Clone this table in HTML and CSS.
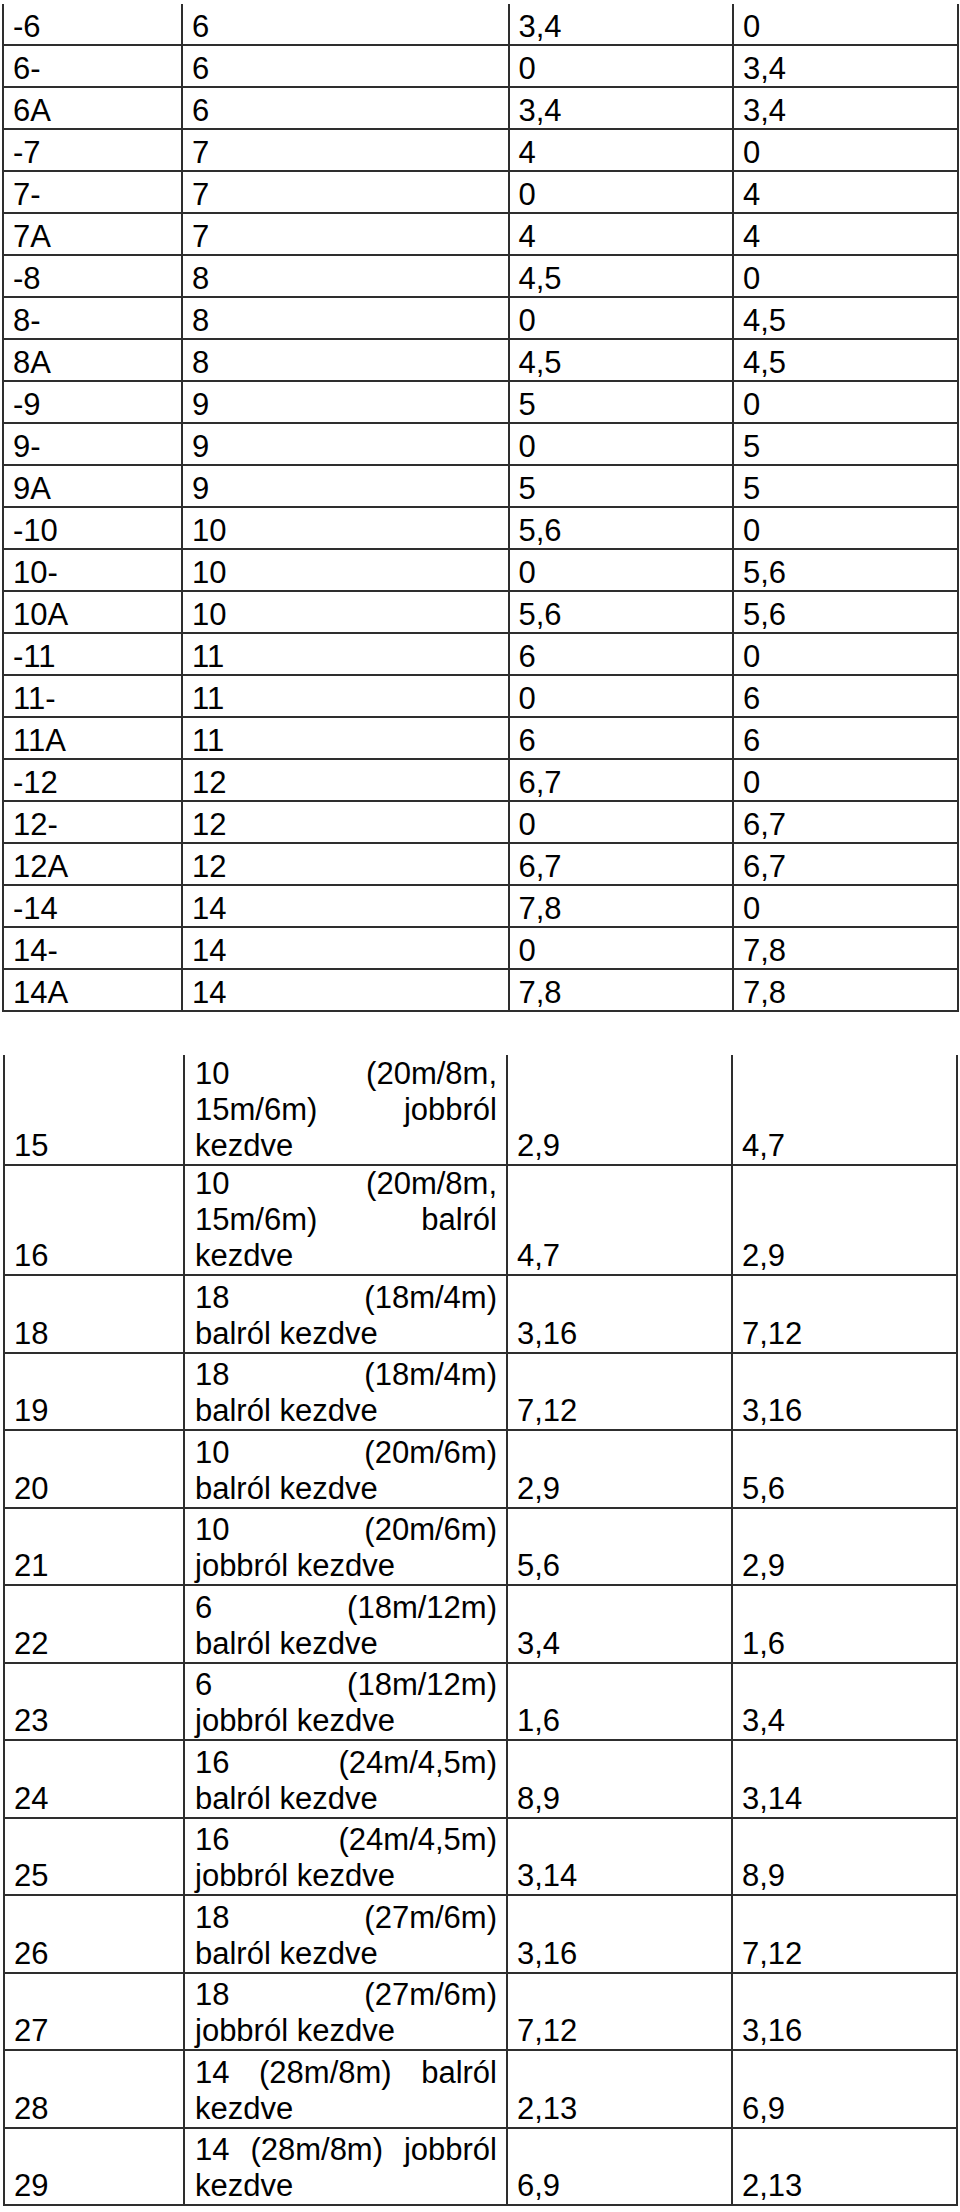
FILE: index.html
```html
<!DOCTYPE html>
<html lang="hu">
<head>
<meta charset="utf-8">
<title>Táblázat</title>
<link rel="stylesheet" href="styles.css">
</head>
<body>
<table class="grid grid-a">
<colgroup><col class="a1"><col class="a2"><col class="a3"><col class="a4"></colgroup>
<tbody>
<tr><td>-6</td><td>6</td><td>3,4</td><td>0</td></tr>
<tr><td>6-</td><td>6</td><td>0</td><td>3,4</td></tr>
<tr><td>6A</td><td>6</td><td>3,4</td><td>3,4</td></tr>
<tr><td>-7</td><td>7</td><td>4</td><td>0</td></tr>
<tr><td>7-</td><td>7</td><td>0</td><td>4</td></tr>
<tr><td>7A</td><td>7</td><td>4</td><td>4</td></tr>
<tr><td>-8</td><td>8</td><td>4,5</td><td>0</td></tr>
<tr><td>8-</td><td>8</td><td>0</td><td>4,5</td></tr>
<tr><td>8A</td><td>8</td><td>4,5</td><td>4,5</td></tr>
<tr><td>-9</td><td>9</td><td>5</td><td>0</td></tr>
<tr><td>9-</td><td>9</td><td>0</td><td>5</td></tr>
<tr><td>9A</td><td>9</td><td>5</td><td>5</td></tr>
<tr><td>-10</td><td>10</td><td>5,6</td><td>0</td></tr>
<tr><td>10-</td><td>10</td><td>0</td><td>5,6</td></tr>
<tr><td>10A</td><td>10</td><td>5,6</td><td>5,6</td></tr>
<tr><td>-11</td><td>11</td><td>6</td><td>0</td></tr>
<tr><td>11-</td><td>11</td><td>0</td><td>6</td></tr>
<tr><td>11A</td><td>11</td><td>6</td><td>6</td></tr>
<tr><td>-12</td><td>12</td><td>6,7</td><td>0</td></tr>
<tr><td>12-</td><td>12</td><td>0</td><td>6,7</td></tr>
<tr><td>12A</td><td>12</td><td>6,7</td><td>6,7</td></tr>
<tr><td>-14</td><td>14</td><td>7,8</td><td>0</td></tr>
<tr><td>14-</td><td>14</td><td>0</td><td>7,8</td></tr>
<tr><td>14A</td><td>14</td><td>7,8</td><td>7,8</td></tr>
</tbody>
</table>

<table class="grid grid-b">
<colgroup><col class="b1"><col class="b2"><col class="b3"><col class="b4"></colgroup>
<tbody>
<tr class="tall"><td>15</td><td class="desc"><div class="jl">10 (20m/8m,</div><div class="jl">15m/6m) jobbról</div><div>kezdve</div></td><td>2,9</td><td>4,7</td></tr>
<tr class="tall"><td>16</td><td class="desc"><div class="jl">10 (20m/8m,</div><div class="jl">15m/6m) balról</div><div>kezdve</div></td><td>4,7</td><td>2,9</td></tr>
<tr><td>18</td><td class="desc"><div class="jl">18 (18m/4m)</div><div>balról kezdve</div></td><td>3,16</td><td>7,12</td></tr>
<tr><td>19</td><td class="desc"><div class="jl">18 (18m/4m)</div><div>balról kezdve</div></td><td>7,12</td><td>3,16</td></tr>
<tr><td>20</td><td class="desc"><div class="jl">10 (20m/6m)</div><div>balról kezdve</div></td><td>2,9</td><td>5,6</td></tr>
<tr><td>21</td><td class="desc"><div class="jl">10 (20m/6m)</div><div>jobbról kezdve</div></td><td>5,6</td><td>2,9</td></tr>
<tr><td>22</td><td class="desc"><div class="jl">6 (18m/12m)</div><div>balról kezdve</div></td><td>3,4</td><td>1,6</td></tr>
<tr><td>23</td><td class="desc"><div class="jl">6 (18m/12m)</div><div>jobbról kezdve</div></td><td>1,6</td><td>3,4</td></tr>
<tr><td>24</td><td class="desc"><div class="jl">16 (24m/4,5m)</div><div>balról kezdve</div></td><td>8,9</td><td>3,14</td></tr>
<tr><td>25</td><td class="desc"><div class="jl">16 (24m/4,5m)</div><div>jobbról kezdve</div></td><td>3,14</td><td>8,9</td></tr>
<tr><td>26</td><td class="desc"><div class="jl">18 (27m/6m)</div><div>balról kezdve</div></td><td>3,16</td><td>7,12</td></tr>
<tr><td>27</td><td class="desc"><div class="jl">18 (27m/6m)</div><div>jobbról kezdve</div></td><td>7,12</td><td>3,16</td></tr>
<tr><td>28</td><td class="desc"><div class="jl">14 (28m/8m) balról</div><div>kezdve</div></td><td>2,13</td><td>6,9</td></tr>
<tr><td>29</td><td class="desc"><div class="jl">14 (28m/8m) jobbról</div><div>kezdve</div></td><td>6,9</td><td>2,13</td></tr>
</tbody>
</table>
</body>
</html>
```

FILE: styles.css
```css
html, body {
  margin: 0;
  padding: 0;
  background: #ffffff;
}

body {
  font-family: "Liberation Sans", Arial, sans-serif;
  font-size: 31px;
  color: #000000;
}

.grid {
  border-collapse: separate;
  border-spacing: 0;
  table-layout: fixed;
}

.grid td {
  border-right: 2px solid #2e2e2e;
  border-bottom: 2px solid #2e2e2e;
  padding: 0 9px;
  text-align: left;
  white-space: nowrap;
}

.grid td:first-child {
  border-left: 2px solid #2e2e2e;
}

/* first table */
.grid-a {
  margin: 4px 0 0 2px;
  width: 957px;
}

.grid-a td {
  line-height: 34px;
  padding-top: 5.75px;
  padding-bottom: 0.25px;
  vertical-align: bottom;
}

.a1 { width: 181px; }
.a2 { width: 326.5px; }
.a3 { width: 224.5px; }
.a4 { width: 225px; }

/* second table */
.grid-b {
  margin: 43px 0 0 3px;
  width: 955px;
}

.grid-b td {
  line-height: 36px;
  padding-top: 3.5px;
  padding-bottom: 0;
  vertical-align: bottom;
}

.grid-b tr.tall td {
  padding-top: 0.5px;
}

.b1 { width: 182px; }
.b2 { width: 323px; }
.b3 { width: 225px; }
.b4 { width: 225px; }

.grid-b td.desc {
  white-space: normal;
  padding-left: 10px;
  padding-right: 9px;
}

.jl {
  text-align: justify;
  text-align-last: justify;
}
```
